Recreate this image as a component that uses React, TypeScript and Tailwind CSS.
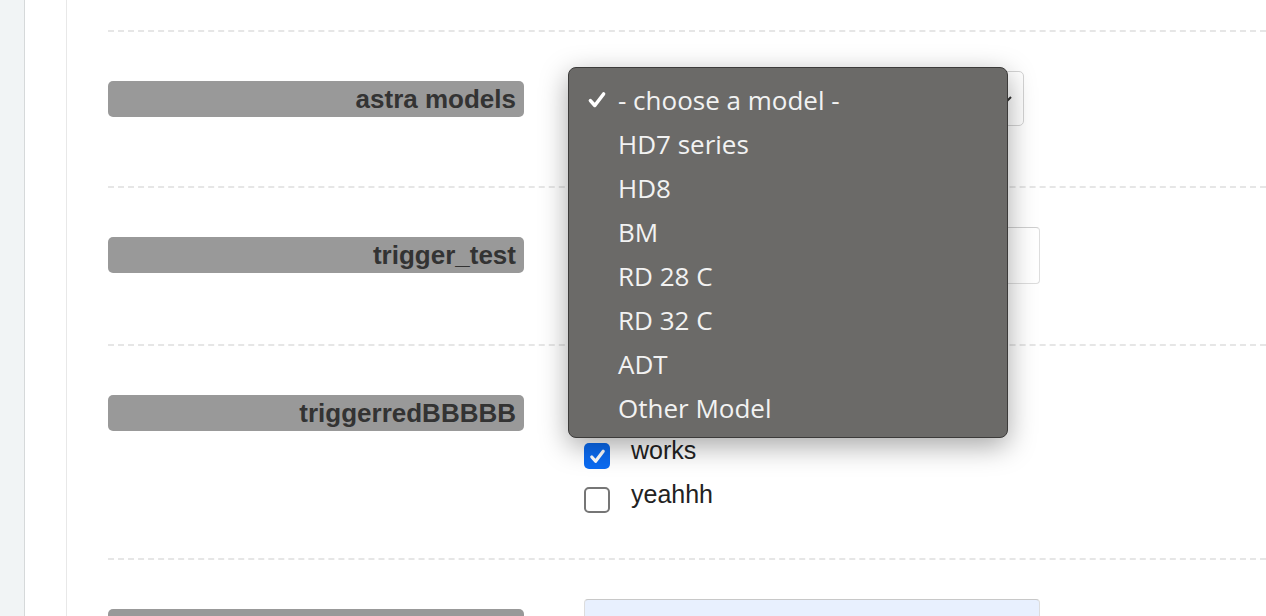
import { ReactNode } from 'react';

const models = ['- choose a model -', 'HD7 series', 'HD8', 'BM', 'RD 28 C', 'RD 32 C', 'ADT', 'Other Model'];

function Label({ children }: { children: ReactNode }) {
  return (
    <div className="w-[416px] h-[36px] mt-[10px] shrink-0 rounded-[5px] bg-[#999999] flex items-center justify-end pr-[8px] text-[26px] font-bold text-[#333333] leading-none">
      {children}
    </div>
  );
}

function Row({ children, label, className = '' }: { children: ReactNode; label: string; className?: string }) {
  return (
    <div className={`shrink-0 border-t-2 border-dashed border-[#e6e6e6] pt-[39px] flex items-start gap-[60px] ${className}`}>
      <Label>{label}</Label>
      <div className="relative">{children}</div>
    </div>
  );
}

function Check({ className, width = 2.6 }: { className?: string; width?: number }) {
  return (
    <svg viewBox="0 0 20 20" className={className} fill="none" stroke="currentColor" strokeWidth={width} strokeLinecap="round" strokeLinejoin="round">
      <path d="M4 10.5l4 4.5L16 4.5" />
    </svg>
  );
}

function Option({ checked, label }: { checked?: boolean; label: string }) {
  return (
    <label className="flex items-start gap-[21px] h-[44px]">
      {checked ? (
        <span className="mt-[6px] w-[26px] h-[26px] rounded-[5px] bg-[#0b6bf2] flex items-center justify-center text-white">
          <Check className="w-[19px] h-[19px]" width={3.4} />
        </span>
      ) : (
        <span className="mt-[6px] w-[26px] h-[26px] rounded-[5px] border-2 border-[#767676] bg-white" />
      )}
      <span className="text-[25px] leading-[26px] text-[#222222]">{label}</span>
    </label>
  );
}

export default function App() {
  return (
    <div className="flex h-[616px] w-[1266px] overflow-hidden bg-white" style={{ fontFamily: '"Liberation Sans", Arial, sans-serif' }}>
      <div className="w-[25px] shrink-0 bg-[#f1f4f5] border-r border-[#d6d9da]" />
      <div className="w-[42px] shrink-0 border-r border-[#e8e8e8]" />
      <div className="flex-1 pl-[41px] pt-[30px] flex flex-col">
        <Row label="astra models" className="h-[156px]">
          {/* select behind */}
          <div className="w-[440px] h-[55px] rounded-[5px] border border-[#d4d4d4] bg-white flex items-center justify-end pr-[10px]">
            <svg viewBox="0 0 12 12" className="w-[12px] h-[12px] text-[#333]" fill="none" stroke="currentColor" strokeWidth="2">
              <path d="M2 4l4 4 4-4" />
            </svg>
          </div>
          {/* open menu */}
          <div className="absolute left-[-16px] top-[-4px] z-10 w-[440px] rounded-[8px] border border-[#3c3b3a] bg-[#6b6a68] pt-[10px] pb-[7px] shadow-[0_8px_28px_rgba(0,0,0,0.35)]" style={{ fontFamily: '"Open Sans", "Liberation Sans", sans-serif' }}>
            {models.map((m, i) => (
              <div key={m} className="h-[44px] flex items-center pl-[17px] text-[26px] text-[#f2f2f2]">
                <span className="w-[32px] shrink-0">
                  {i === 0 && <Check className="w-[22px] h-[22px] text-white" width={3.2} />}
                </span>
                {m}
              </div>
            ))}
          </div>
        </Row>
        <Row label="trigger_test" className="h-[158px]">
          <div className="w-[456px] h-[57px] rounded-[4px] border border-[#dddddd] border-t-[#cfcfcf] bg-white" />
        </Row>
        <Row label="triggerredBBBBB" className="h-[214px]">
          <div className="flex flex-col pt-[52px]">
            <Option checked label="works" />
            <Option label="yeahhh" />
          </div>
        </Row>
        <Row label="" className="h-[160px]">
          <div className="w-[456px] h-[57px] rounded-[4px] border border-[#dddddd] border-t-[#c8c8c8] bg-[#e8f0fe]" />
        </Row>
      </div>
    </div>
  );
}
